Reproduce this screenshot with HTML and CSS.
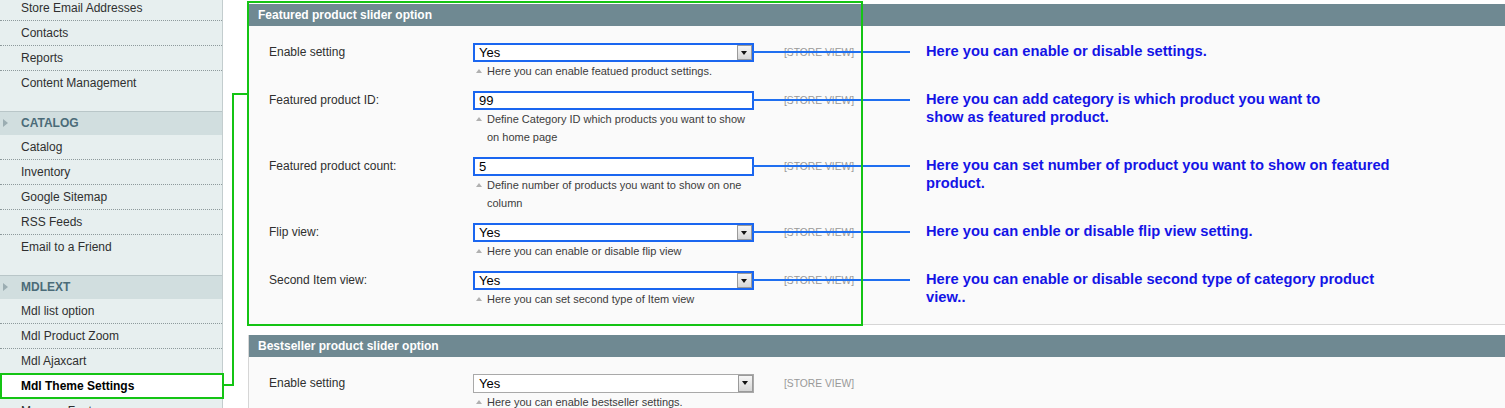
FILE: index.html
```html
<!DOCTYPE html>
<html lang="en">
<head>
<meta charset="utf-8">
<title>Mdl Theme Settings</title>
<link rel="stylesheet" href="styles.css">
</head>
<body>
<div class="page">
  <aside class="side">
    <ul class="group">
      <li>Store Email Addresses</li>
      <li>Contacts</li>
      <li>Reports</li>
      <li>Content Management</li>
    </ul>
    <div class="group-head">CATALOG</div>
    <ul class="group">
      <li>Catalog</li>
      <li>Inventory</li>
      <li>Google Sitemap</li>
      <li>RSS Feeds</li>
      <li>Email to a Friend</li>
    </ul>
    <div class="group-head">MDLEXT</div>
    <ul class="group">
      <li>Mdl list option</li>
      <li>Mdl Product Zoom</li>
      <li>Mdl Ajaxcart</li>
      <li class="active">Mdl Theme Settings</li>
      <li>Manage Fonts</li>
    </ul>
  </aside>

  <main class="main">
    <div class="focus-frame"></div>

    <section class="fs">
      <h2 class="fs-head">Featured product slider option</h2>
      <div class="fs-body">
        <div class="row">
          <div class="label">Enable setting</div>
          <div class="value">
            <div class="field select hl"><span>Yes</span><span class="btn"></span></div>
            <p class="note">Here you can enable featued product settings.</p>
          </div>
          <div class="scope">[STORE VIEW]</div>
          <div class="annot">Here you can enable or disable settings.</div>
        </div>

        <div class="row">
          <div class="label">Featured product ID:</div>
          <div class="value">
            <div class="field hl"><span>99</span></div>
            <p class="note">Define Category ID which products you want to show<br>on home page</p>
          </div>
          <div class="scope">[STORE VIEW]</div>
          <div class="annot">Here you can add category is which product you want to<br>show as featured product.</div>
        </div>

        <div class="row">
          <div class="label">Featured product count:</div>
          <div class="value">
            <div class="field hl"><span>5</span></div>
            <p class="note">Define number of products you want to show on one<br>column</p>
          </div>
          <div class="scope">[STORE VIEW]</div>
          <div class="annot">Here you can set number of product you want to show on featured<br>product.</div>
        </div>

        <div class="row">
          <div class="label">Flip view:</div>
          <div class="value">
            <div class="field select hl"><span>Yes</span><span class="btn"></span></div>
            <p class="note">Here you can enable or disable flip view</p>
          </div>
          <div class="scope">[STORE VIEW]</div>
          <div class="annot">Here you can enble or disable flip view setting.</div>
        </div>

        <div class="row">
          <div class="label">Second Item view:</div>
          <div class="value">
            <div class="field select hl"><span>Yes</span><span class="btn"></span></div>
            <p class="note">Here you can set second type of Item view</p>
          </div>
          <div class="scope">[STORE VIEW]</div>
          <div class="annot">Here you can enable or disable second type of category product<br>view..</div>
        </div>
      </div>
    </section>

    <section class="fs">
      <h2 class="fs-head">Bestseller product slider option</h2>
      <div class="fs-body">
        <div class="row">
          <div class="label">Enable setting</div>
          <div class="value">
            <div class="field select"><span>Yes</span><span class="btn"></span></div>
            <p class="note">Here you can enable bestseller settings.</p>
          </div>
          <div class="scope">[STORE VIEW]</div>
        </div>
      </div>
    </section>
  </main>

  <svg class="connector" width="260" height="408" viewBox="0 0 260 408" aria-hidden="true">
    <polyline points="223,385 233,385 233,94 249,94" fill="none" stroke="#14c414" stroke-width="2"/>
  </svg>
</div>
</body>
</html>
```

FILE: styles.css
```css
html, body {
  margin: 0;
  padding: 0;
  background: #ffffff;
  overflow: hidden;
}

body {
  font-family: "Liberation Sans", Arial, sans-serif;
  font-size: 12px;
  color: #2f2f2f;
}

.page {
  position: relative;
  display: flex;
  align-items: flex-start;
  height: 408px;
  overflow: hidden;
}

/* ---------- sidebar ---------- */
.side {
  width: 222px;
  flex: 0 0 222px;
  margin-top: -4px;
  background: #e7efef;
  border-right: 1px solid #c3cdce;
  min-height: 430px;
}

.group {
  list-style: none;
  margin: 0;
  padding: 0 0 16px 0;
}

.group li {
  height: 24px;
  line-height: 24px;
  padding-left: 21px;
  border-bottom: 1px dotted #8e9a9c;
  color: #2f2f2f;
  white-space: nowrap;
}

.group li:last-child {
  border-bottom: none;
}

.group li.active {
  box-sizing: border-box;
  height: 26px;
  line-height: 22px;
  margin-top: -1px;
  margin-right: -2px;
  padding-left: 19px;
  background: #ffffff;
  border: 2px solid #14c414;
  font-weight: bold;
  color: #000000;
  position: relative;
  z-index: 2;
}

.group-head {
  position: relative;
  height: 23px;
  line-height: 23px;
  padding-left: 21px;
  background: #d1dedf;
  border-top: 1px solid #b9c6c8;
  font-weight: bold;
  color: #4b6b78;
}

.group-head::before {
  content: "";
  position: absolute;
  left: 3px;
  top: 7px;
  border-left: 5px solid #9badb2;
  border-top: 4px solid transparent;
  border-bottom: 4px solid transparent;
}

/* ---------- main ---------- */
.main {
  position: relative;
  flex: 1;
  min-width: 0;
  margin-left: 25px;
  padding-top: 4px;
}

.focus-frame {
  position: absolute;
  left: -1px;
  top: 1px;
  width: 616px;
  height: 325px;
  box-sizing: border-box;
  border: 2px solid #14c414;
  pointer-events: none;
  z-index: 3;
}

.fs {
  background: #fafafa;
  border-left: 1px solid #d6d6d6;
  border-bottom: 1px solid #d6d6d6;
  margin-bottom: 10px;
}

.fs-head {
  margin: 0;
  height: 22px;
  line-height: 22px;
  padding-left: 9px;
  background: #6f8992;
  color: #ffffff;
  font-size: 12px;
  font-weight: bold;
}

.fs-body {
  padding: 17px 0 5px 20px;
}

.row {
  display: flex;
  align-items: flex-start;
  margin-bottom: 11px;
}

.label {
  width: 204px;
  flex: 0 0 204px;
  line-height: 19px;
  color: #2f2f2f;
}

.value {
  width: 281px;
  flex: 0 0 281px;
}

.field {
  position: relative;
  box-sizing: border-box;
  height: 19px;
  border: 1px solid #a9a9a9;
  background: #ffffff;
  font-size: 13px;
  line-height: 17px;
  padding-left: 5px;
  color: #000000;
}

.field.hl {
  border: 2px solid #1a66f0;
  line-height: 15px;
  padding-left: 4px;
}

.field.hl::after {
  content: "";
  position: absolute;
  left: 100%;
  top: 50%;
  margin-top: -2px;
  width: 158px;
  height: 2px;
  background: #1f6ff0;
  z-index: 2;
}

.select .btn {
  position: absolute;
  right: 0;
  top: 0;
  bottom: 0;
  width: 15px;
  box-sizing: border-box;
  border: 1px solid #9a9a9a;
  background: linear-gradient(#f6f6f6, #d6d6d6);
}

.select .btn::after {
  content: "";
  position: absolute;
  left: 3px;
  top: 5px;
  border-top: 4px solid #111111;
  border-left: 3.5px solid transparent;
  border-right: 3.5px solid transparent;
}

.note {
  position: relative;
  margin: 0;
  padding-left: 14px;
  font-size: 11px;
  line-height: 18px;
  color: #3c3c3c;
  white-space: nowrap;
}

.note::before {
  content: "";
  position: absolute;
  left: 3px;
  top: 7px;
  border-bottom: 4px solid #b0b0b0;
  border-left: 3px solid transparent;
  border-right: 3px solid transparent;
}

.scope {
  width: 142px;
  flex: 0 0 142px;
  margin-left: 30px;
  font-size: 10.3px;
  line-height: 19px;
  color: #999999;
}

.annot {
  margin-top: -1px;
  font-size: 14.7px;
  font-weight: bold;
  line-height: 18px;
  color: #1414e6;
  white-space: nowrap;
}

.connector {
  position: absolute;
  left: 0;
  top: 0;
  pointer-events: none;
  z-index: 4;
}
```
